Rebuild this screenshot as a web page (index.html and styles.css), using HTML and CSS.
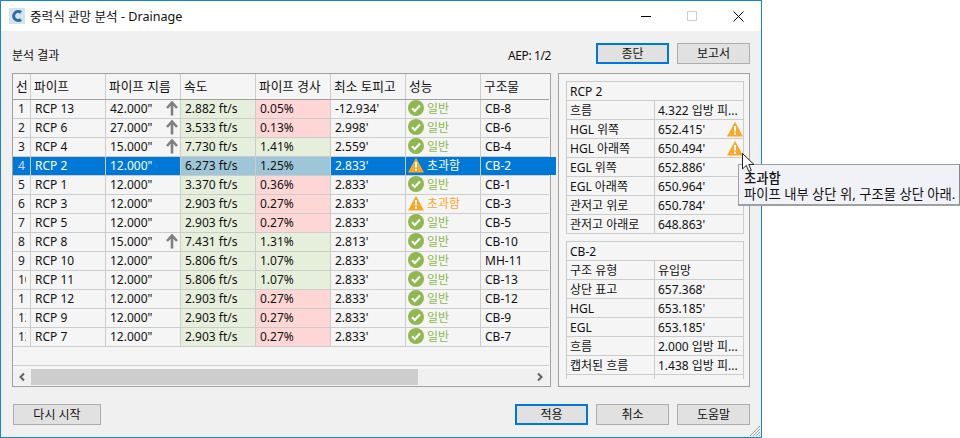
FILE: index.html
```html
<!DOCTYPE html>
<html lang="ko">
<head>
<meta charset="utf-8">
<title>중력식 관망 분석 - Drainage</title>
<link rel="stylesheet" href="styles.css">
</head>
<body>
<svg class="defs" width="0" height="0" aria-hidden="true">
  <defs>
    <symbol id="up" viewBox="0 0 12 15"><path d="M6 14.500V2M1 7l5-5.500L11 7" fill="none" stroke="#808080" stroke-width="2.600"/></symbol>
    <symbol id="ok" viewBox="0 0 16 16"><circle cx="8" cy="8" r="8" fill="#8fb84e"/><path d="M4 8.200l2.800 2.800L12 5.600" fill="none" stroke="#fff" stroke-width="2.200"/></symbol>
    <symbol id="warn" viewBox="0 0 16 15"><path d="M8 .3L16 15H0z" fill="#f9a825"/><path d="M8 4.500v5.600M8 11.200v2" stroke="#fff" stroke-width="2"/></symbol>
  </defs>
</svg>
<div class="window">
  <header class="titlebar">
    <svg class="logo" viewBox="0 0 16 16" width="16" height="16"><rect width="16" height="16" fill="#d3e4f0"/><path d="M12 4.500A4.500 4.500 0 1 0 12 11.500" fill="none" stroke="#2a6f9f" stroke-width="3"/></svg>
    <span class="title">중력식 관망 분석 - Drainage</span>
    <span class="controls">
      <svg width="11" height="11" viewBox="0 0 11 11"><path d="M0 5.500h10" stroke="#000"/></svg>
      <svg width="11" height="11" viewBox="0 0 11 11"><path d="M.5.5h9v9h-9z" fill="none" stroke="#ccc"/></svg>
      <svg width="11" height="11" viewBox="0 0 11 11"><path d="M.5.5l10 10M10.500.5l-10 10" stroke="#000"/></svg>
    </span>
  </header>
  <main class="content">
    <div class="toolbar">
      <span class="heading">분석 결과</span>
      <span class="aep">AEP: 1/2</span>
      <button class="btn primary">종단</button>
      <button class="btn">보고서</button>
    </div>
    <div class="panels">
      <section class="grid-panel">
        <div class="row head">
          <div class="c num">선</div><div class="c">파이프</div><div class="c">파이프 지름</div><div class="c">속도</div><div class="c">파이프 경사</div><div class="c">최소 토피고</div><div class="c">성능</div><div class="c">구조물</div>
        </div>
        <div class="row"><div class="c num"><span>1</span></div><div class="c">RCP 13</div><div class="c dia">42.000"<svg class="up"><use href="#up"/></svg></div><div class="c g">2.882 ft/s</div><div class="c r">0.05%</div><div class="c">-12.934'</div><div class="c perf ok"><svg class="ic"><use href="#ok"/></svg>일반</div><div class="c">CB-8</div></div>
        <div class="row"><div class="c num"><span>2</span></div><div class="c">RCP 6</div><div class="c dia">27.000"<svg class="up"><use href="#up"/></svg></div><div class="c g">3.533 ft/s</div><div class="c r">0.13%</div><div class="c">2.998'</div><div class="c perf ok"><svg class="ic"><use href="#ok"/></svg>일반</div><div class="c">CB-6</div></div>
        <div class="row"><div class="c num"><span>3</span></div><div class="c">RCP 4</div><div class="c dia">15.000"<svg class="up"><use href="#up"/></svg></div><div class="c g">7.730 ft/s</div><div class="c g">1.41%</div><div class="c">2.559'</div><div class="c perf ok"><svg class="ic"><use href="#ok"/></svg>일반</div><div class="c">CB-4</div></div>
        <div class="row sel"><div class="c num"><span>4</span></div><div class="c">RCP 2</div><div class="c dia">12.000"</div><div class="c s">6.273 ft/s</div><div class="c s">1.25%</div><div class="c">2.833'</div><div class="c perf"><svg class="ic"><use href="#warn"/></svg>초과함</div><div class="c">CB-2</div></div>
        <div class="row"><div class="c num"><span>5</span></div><div class="c">RCP 1</div><div class="c dia">12.000"</div><div class="c g">3.370 ft/s</div><div class="c r">0.36%</div><div class="c">2.833'</div><div class="c perf ok"><svg class="ic"><use href="#ok"/></svg>일반</div><div class="c">CB-1</div></div>
        <div class="row"><div class="c num"><span>6</span></div><div class="c">RCP 3</div><div class="c dia">12.000"</div><div class="c g">2.903 ft/s</div><div class="c r">0.27%</div><div class="c">2.833'</div><div class="c perf warn"><svg class="ic"><use href="#warn"/></svg>초과함</div><div class="c">CB-3</div></div>
        <div class="row"><div class="c num"><span>7</span></div><div class="c">RCP 5</div><div class="c dia">12.000"</div><div class="c g">2.903 ft/s</div><div class="c r">0.27%</div><div class="c">2.833'</div><div class="c perf ok"><svg class="ic"><use href="#ok"/></svg>일반</div><div class="c">CB-5</div></div>
        <div class="row"><div class="c num"><span>8</span></div><div class="c">RCP 8</div><div class="c dia">15.000"<svg class="up"><use href="#up"/></svg></div><div class="c g">7.431 ft/s</div><div class="c g">1.31%</div><div class="c">2.813'</div><div class="c perf ok"><svg class="ic"><use href="#ok"/></svg>일반</div><div class="c">CB-10</div></div>
        <div class="row"><div class="c num"><span>9</span></div><div class="c">RCP 10</div><div class="c dia">12.000"</div><div class="c g">5.806 ft/s</div><div class="c g">1.07%</div><div class="c">2.833'</div><div class="c perf ok"><svg class="ic"><use href="#ok"/></svg>일반</div><div class="c">MH-11</div></div>
        <div class="row"><div class="c num"><span>10</span></div><div class="c">RCP 11</div><div class="c dia">12.000"</div><div class="c g">5.806 ft/s</div><div class="c g">1.07%</div><div class="c">2.833'</div><div class="c perf ok"><svg class="ic"><use href="#ok"/></svg>일반</div><div class="c">CB-13</div></div>
        <div class="row"><div class="c num"><span>11</span></div><div class="c">RCP 12</div><div class="c dia">12.000"</div><div class="c g">2.903 ft/s</div><div class="c r">0.27%</div><div class="c">2.833'</div><div class="c perf ok"><svg class="ic"><use href="#ok"/></svg>일반</div><div class="c">CB-12</div></div>
        <div class="row"><div class="c num"><span>12</span></div><div class="c">RCP 9</div><div class="c dia">12.000"</div><div class="c g">2.903 ft/s</div><div class="c r">0.27%</div><div class="c">2.833'</div><div class="c perf ok"><svg class="ic"><use href="#ok"/></svg>일반</div><div class="c">CB-9</div></div>
        <div class="row"><div class="c num"><span>13</span></div><div class="c">RCP 7</div><div class="c dia">12.000"</div><div class="c g">2.903 ft/s</div><div class="c r">0.27%</div><div class="c">2.833'</div><div class="c perf ok"><svg class="ic"><use href="#ok"/></svg>일반</div><div class="c">CB-7</div></div>
        <div class="spacer"></div>
        <div class="scrollbar">
          <span class="arrow"><svg width="8" height="10" viewBox="0 0 8 10"><path d="M6 1.500L2.500 5 6 8.500" fill="none" stroke="#606060" stroke-width="2"/></svg></span>
          <span class="thumb"></span>
          <span class="track"></span>
          <span class="arrow"><svg width="8" height="10" viewBox="0 0 8 10"><path d="M2 1.500L5.500 5 2 8.500" fill="none" stroke="#606060" stroke-width="2"/></svg></span>
        </div>
      </section>
      <aside class="side-panel">
        <div class="props">
          <div class="prop full">RCP 2</div>
          <div class="prop"><div class="k">흐름</div><div class="v">4.322 입방 피...</div></div>
          <div class="prop"><div class="k">HGL 위쪽</div><div class="v">652.415'<svg class="ic warn-ic"><use href="#warn"/></svg></div></div>
          <div class="prop"><div class="k">HGL 아래쪽</div><div class="v">650.494'<svg class="ic warn-ic"><use href="#warn"/></svg></div></div>
          <div class="prop"><div class="k">EGL 위쪽</div><div class="v">652.886'</div></div>
          <div class="prop"><div class="k">EGL 아래쪽</div><div class="v">650.964'</div></div>
          <div class="prop"><div class="k">관저고 위로</div><div class="v">650.784'</div></div>
          <div class="prop last"><div class="k">관저고 아래로</div><div class="v">648.863'</div></div>
        </div>
        <div class="props clipped">
          <div class="prop full">CB-2</div>
          <div class="prop"><div class="k">구조 유형</div><div class="v">유입망</div></div>
          <div class="prop"><div class="k">상단 표고</div><div class="v">657.368'</div></div>
          <div class="prop"><div class="k">HGL</div><div class="v">653.185'</div></div>
          <div class="prop"><div class="k">EGL</div><div class="v">653.185'</div></div>
          <div class="prop"><div class="k">흐름</div><div class="v">2.000 입방 피...</div></div>
          <div class="prop"><div class="k">캡처된 흐름</div><div class="v">1.438 입방 피...</div></div>
          <div class="prop stub"><div class="k"></div><div class="v"></div></div>
        </div>
      </aside>
    </div>
    <div class="footer">
      <button class="btn wide">다시 시작</button>
      <span class="fill"></span>
      <button class="btn primary">적용</button>
      <button class="btn">취소</button>
      <button class="btn">도움말</button>
    </div>
  </main>
  <svg class="grip" width="12" height="12" viewBox="0 0 12 12"><path d="M11 1L1 11M11 4L4 11M11 7L7 11M11 10l-1 1" stroke="#a0a0a0"/></svg>
</div>
<div class="tooltip"><strong>초과함</strong><br>파이프 내부 상단 위, 구조물 상단 아래.</div>
<svg class="cursor" width="13" height="20" viewBox="0 0 13 20"><path d="M.5.5v15.500l3.800-3.600 2.500 6 2.500-1-2.500-5.900h5.200z" fill="#fff" stroke="#222" stroke-width="1"/></svg>
</body>
</html>
```
FILE: styles.css
```css
* { box-sizing: border-box; }
html, body { margin: 0; height: 100%; background: #fff; overflow: hidden; }
body { font: 12px/19px "Noto Sans", "Noto Sans CJK KR", sans-serif; color: #111; position: relative; }
.defs { position: absolute; }
.window { width: 762px; height: 438px; border: 1px solid #1883d7; display: flex; flex-direction: column; background: #f0f0f0; position: relative; }
.titlebar { height: 30px; background: #fff; display: flex; align-items: center; padding-left: 8px; flex: none; }
.logo { margin-right: 5px; }
.title { flex: 1; font-size: 12.6px; }
.controls { display: flex; gap: 35px; padding-right: 17px; }
.content { flex: 1; display: flex; flex-direction: column; padding: 0 11px; }
.toolbar { height: 42px; display: flex; align-items: flex-start; gap: 8px; padding-top: 12px; flex: none; }
.heading { flex: 1; margin-top: 3px; }
.aep { margin: 3px 37px 0 0; letter-spacing: -0.4px; }
.btn { font: inherit; width: 73px; height: 21px; padding: 0; background: #e1e1e1; border: 1px solid #adadad; color: #111; line-height: 17px; }
.btn.primary { border: 2px solid #0078d7; }
.btn.wide { width: 88px; margin-left: 1px; }
.panels { height: 314px; display: flex; gap: 7px; flex: none; }
.grid-panel { width: 539px; border: 1px solid #a0a0a0; background: #f5f5f5; display: flex; flex-direction: column; padding: 0 1px 1px 0; }
.row { display: grid; grid-template-columns: 18px repeat(7, 75px); height: 19px; line-height: 17px; border-bottom: 1px solid #ccc; flex: none; }
.row.head { height: 26px; border-bottom: 1px solid #a0a0a0; line-height: 24px; font-size: 12.7px; }
.c { padding: 0 0 0 4px; border-right: 1px solid #ccc; overflow: hidden; white-space: nowrap; position: relative; }
.c:last-child { border-right: 0; }
.head .c { padding-left: 3px; }
.num span { display: block; width: 8px; overflow: hidden; color: #222; }
.c.num { padding-left: 5px; }
.head .c.num { padding-left: 3px; }
.g { background: #e6efdb; }
.r { background: #ffd6d6; }
.sel .c { background: #0078d7; color: #fff; }
.sel .num span { color: #dde; }
.sel .c.s { background: #9fc6d8; color: #111; }
.perf.c { display: flex; align-items: flex-start; padding-left: 2px; gap: 3px; }
.ok { color: #8fb84e; }
.warn { color: #f9a825; }
.ic { width: 16px; height: 16px; flex: none; }
.up { width: 12px; height: 15px; position: absolute; right: 2px; top: 1px; }
.spacer { flex: 1; border-bottom: 1px solid #ccc; }
.scrollbar { margin-top: 3px; display: flex; flex: none; height: 16px; background: #f0f0f0; }
.arrow { width: 18px; display: flex; align-items: center; justify-content: center; }
.thumb { width: 387px; background: #cdcdcd; }
.track { flex: 1; }
.side-panel { width: 192px; border: 1px solid #a0a0a0; background: #f5f5f5; padding: 7px 5px 0 7px; display: flex; flex-direction: column; gap: 7px; overflow: hidden; }
.props { border-left: 1px solid #ccc; border-right: 1px solid #ccc; border-top: 1px solid #ccc; flex: none; }
.prop { display: grid; grid-template-columns: 88px 1fr; height: 19px; border-bottom: 1px solid #ccc; }
.prop.stub { height: 4px; border-bottom: 0; }
.prop.full { display: block; padding-left: 3px; }
.k { padding-left: 3px; border-right: 1px solid #ccc; white-space: nowrap; }
.v { padding-left: 3px; white-space: nowrap; position: relative; }
.warn-ic { position: absolute; right: 0; top: 1px; }
.footer { height: 52px; display: flex; gap: 8px; padding-top: 17px; }
.fill { flex: 1; }
.tooltip { position: absolute; left: 738px; top: 164px; width: 222px; height: 42px; padding: 5px 0 0 5px; background: #f1f2f7; border: 1px solid #a0a0a0; border-bottom-width: 2px; border-right-color: #888; font-size: 13.3px; line-height: 16px; white-space: nowrap; }
.tooltip strong { font-weight: 500; }
.cursor { position: absolute; left: 742px; top: 153px; }
.grip { position: absolute; right: 0; bottom: 0; }
```
